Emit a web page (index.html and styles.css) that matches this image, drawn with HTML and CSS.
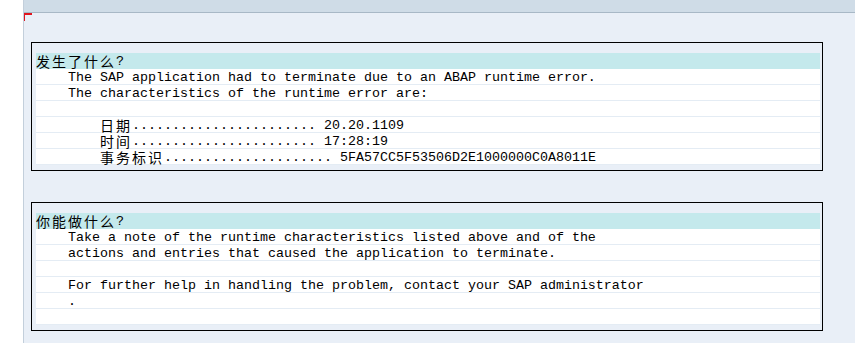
FILE: index.html
```html
<!DOCTYPE html>
<html lang="zh-CN">
<head>
    <meta charset="UTF-8">
    <meta name="viewport" content="width=device-width, initial-scale=1.0">
    <title>ABAP runtime error</title>
    <link rel="stylesheet" href="styles.css">
</head>

<body>
    <div class="sidebar"></div>

    <div class="main">
        <div class="toolbar"></div>

        <div class="content">
            <!-- What happened -->
            <div class="panel">
                <div class="row head"><span class="cj">发生了什么</span>?</div>
                <div class="row">    The SAP application had to terminate due to an ABAP runtime error.</div>
                <div class="row">    The characteristics of the runtime error are:</div>
                <div class="row"></div>
                <div class="row">        <span class="cj">日期</span>....................... 20.20.1109</div>
                <div class="row">        <span class="cj">时间</span>....................... 17:28:19</div>
                <div class="row">        <span class="cj">事务标识</span>..................... 5FA57CC5F53506D2E1000000C0A8011E</div>
            </div>

            <!-- What can you do -->
            <div class="panel">
                <div class="row head"><span class="cj">你能做什么</span>?</div>
                <div class="row">    Take a note of the runtime characteristics listed above and of the</div>
                <div class="row">    actions and entries that caused the application to terminate.</div>
                <div class="row"></div>
                <div class="row">    For further help in handling the problem, contact your SAP administrator</div>
                <div class="row">    .</div>
                <div class="row"></div>
            </div>
        </div>
    </div>
</body>

</html>
```

FILE: styles.css
```css
body {
    margin: 0;
    display: flex;
    min-height: 100vh;
    background-color: #ffffff;
    font-family: "Liberation Mono", "Noto Sans CJK SC", monospace;
    font-size: 13.33px;
    color: #000;
}

.sidebar {
    width: 23px;
    border-right: 1px solid #c3cfdb;
    background: #ffffff;
}

.main {
    flex: 1;
    display: flex;
    flex-direction: column;
    background-color: #e9eff7;
}

.toolbar {
    height: 12px;
    background-color: #cfdce7;
    border-bottom: 1px solid #a8b8c6;
}

.content {
    position: relative;
    padding: 29px 32px 0 7px;
    display: flex;
    flex-direction: column;
    gap: 31px;
}

/* focus corner marker */
.content::before {
    content: "";
    position: absolute;
    left: 0;
    top: 0;
    width: 7px;
    height: 6px;
    border-top: 2px solid #e0141e;
    border-left: 1px solid #e0141e;
}

.panel {
    border: 1px solid #000;
    padding: 10px 2px 5px 4px;
}

.row {
    height: 16px;
    box-sizing: border-box;
    padding-top: 1px;
    line-height: 15px;
    white-space: pre;
    background: #ffffff;
    border-bottom: 1px solid #e4ecf4;
}

.row.head {
    background-color: #c4e9ec;
    border-bottom-color: #c4e9ec;
}

.cj {
    font-family: "Noto Sans CJK SC", sans-serif;
    font-size: 14px;
    letter-spacing: 2px;
    line-height: 15px;
    vertical-align: top;
}
```
